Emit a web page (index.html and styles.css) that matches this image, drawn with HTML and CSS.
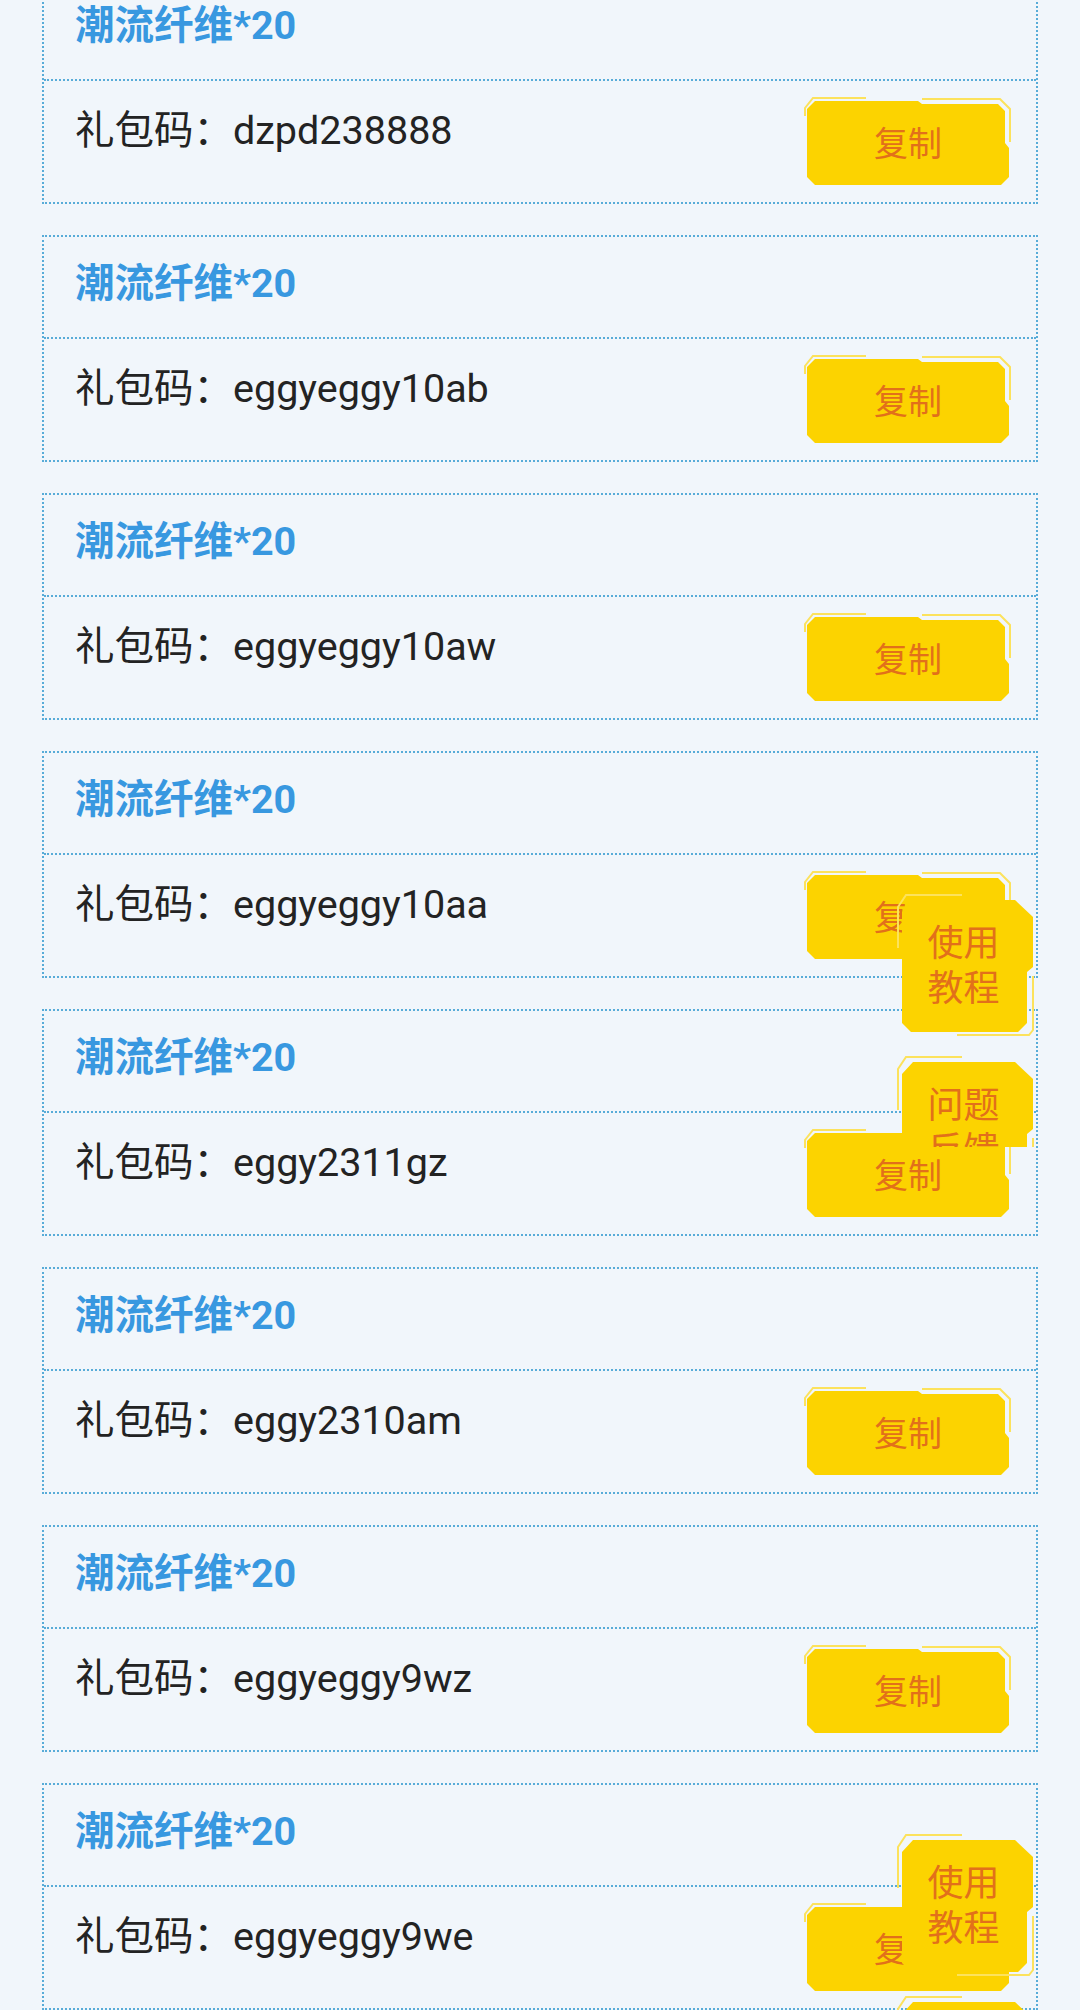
FILE: index.html
```html
<!DOCTYPE html>
<html lang="zh-CN">
<head>
    <meta charset="UTF-8">
    <meta name="viewport" content="width=device-width, initial-scale=1.0">
    <title>礼包码</title>
    <link rel="stylesheet" href="styles.css">
</head>
<body>
    <div class="page">
        <ul class="gift-list">
            <li class="gift">
                <div class="gift-name">潮流纤维*20</div>
                <div class="gift-code">
                    <span class="code-text">礼包码：dzpd238888</span>
                    <button class="copy-btn">
                        <svg class="copy-bg" viewBox="0 0 208 92"><polygon points="3,13 11,5 114,5 118,8 194,8 201,15 201,47 205,52 205,81 197,89 11,89 3,81"/><path d="M1,20 L1,12 L9,2 L62,2 M118,3 L196,3 L206,13 L206,46"/></svg>
                        <span class="copy-label">复制</span>
                    </button>
                </div>
            </li>
            <li class="gift">
                <div class="gift-name">潮流纤维*20</div>
                <div class="gift-code">
                    <span class="code-text">礼包码：eggyeggy10ab</span>
                    <button class="copy-btn">
                        <svg class="copy-bg" viewBox="0 0 208 92"><polygon points="3,13 11,5 114,5 118,8 194,8 201,15 201,47 205,52 205,81 197,89 11,89 3,81"/><path d="M1,20 L1,12 L9,2 L62,2 M118,3 L196,3 L206,13 L206,46"/></svg>
                        <span class="copy-label">复制</span>
                    </button>
                </div>
            </li>
            <li class="gift">
                <div class="gift-name">潮流纤维*20</div>
                <div class="gift-code">
                    <span class="code-text">礼包码：eggyeggy10aw</span>
                    <button class="copy-btn">
                        <svg class="copy-bg" viewBox="0 0 208 92"><polygon points="3,13 11,5 114,5 118,8 194,8 201,15 201,47 205,52 205,81 197,89 11,89 3,81"/><path d="M1,20 L1,12 L9,2 L62,2 M118,3 L196,3 L206,13 L206,46"/></svg>
                        <span class="copy-label">复制</span>
                    </button>
                </div>
            </li>
            <li class="gift">
                <div class="gift-name">潮流纤维*20</div>
                <div class="gift-code">
                    <span class="code-text">礼包码：eggyeggy10aa</span>
                    <button class="copy-btn">
                        <svg class="copy-bg" viewBox="0 0 208 92"><polygon points="3,13 11,5 114,5 118,8 194,8 201,15 201,47 205,52 205,81 197,89 11,89 3,81"/><path d="M1,20 L1,12 L9,2 L62,2 M118,3 L196,3 L206,13 L206,46"/></svg>
                        <span class="copy-label">复制</span>
                    </button>
                </div>
            </li>
            <li class="gift">
                <div class="gift-name">潮流纤维*20</div>
                <div class="gift-code">
                    <span class="code-text">礼包码：eggy2311gz</span>
                    <button class="copy-btn">
                        <svg class="copy-bg" viewBox="0 0 208 92"><polygon points="3,13 11,5 114,5 118,8 194,8 201,15 201,47 205,52 205,81 197,89 11,89 3,81"/><path d="M1,20 L1,12 L9,2 L62,2 M118,3 L196,3 L206,13 L206,46"/></svg>
                        <span class="copy-label">复制</span>
                    </button>
                </div>
            </li>
            <li class="gift">
                <div class="gift-name">潮流纤维*20</div>
                <div class="gift-code">
                    <span class="code-text">礼包码：eggy2310am</span>
                    <button class="copy-btn">
                        <svg class="copy-bg" viewBox="0 0 208 92"><polygon points="3,13 11,5 114,5 118,8 194,8 201,15 201,47 205,52 205,81 197,89 11,89 3,81"/><path d="M1,20 L1,12 L9,2 L62,2 M118,3 L196,3 L206,13 L206,46"/></svg>
                        <span class="copy-label">复制</span>
                    </button>
                </div>
            </li>
            <li class="gift">
                <div class="gift-name">潮流纤维*20</div>
                <div class="gift-code">
                    <span class="code-text">礼包码：eggyeggy9wz</span>
                    <button class="copy-btn">
                        <svg class="copy-bg" viewBox="0 0 208 92"><polygon points="3,13 11,5 114,5 118,8 194,8 201,15 201,47 205,52 205,81 197,89 11,89 3,81"/><path d="M1,20 L1,12 L9,2 L62,2 M118,3 L196,3 L206,13 L206,46"/></svg>
                        <span class="copy-label">复制</span>
                    </button>
                </div>
            </li>
            <li class="gift">
                <div class="gift-name">潮流纤维*20</div>
                <div class="gift-code">
                    <span class="code-text">礼包码：eggyeggy9we</span>
                    <button class="copy-btn">
                        <svg class="copy-bg" viewBox="0 0 208 92"><polygon points="3,13 11,5 114,5 118,8 194,8 201,15 201,47 205,52 205,81 197,89 11,89 3,81"/><path d="M1,20 L1,12 L9,2 L62,2 M118,3 L196,3 L206,13 L206,46"/></svg>
                        <span class="copy-label">复制</span>
                    </button>
                </div>
            </li>
        </ul>

        <!-- 悬浮按钮 -->
        <a class="float-btn guide-top" href="#">
            <span class="float-inner">
                <svg class="float-bg" viewBox="0 0 140 142"><polygon points="6,18 17,6 119,6 137,23 137,73 131,78 131,129 122,138 15,138 6,129"/><path d="M2,54 L2,13 L10,1 L66,1 M137,82 L137,136 L133,141 L61,141"/></svg>
                <span class="float-label">使用<br>教程</span>
            </span>
        </a>
        <a class="float-btn cut feedback-top" href="#">
            <span class="float-inner">
                <svg class="float-bg" viewBox="0 0 140 142"><polygon points="6,18 17,6 119,6 137,23 137,73 131,78 131,129 122,138 15,138 6,129"/><path d="M2,54 L2,13 L10,1 L66,1 M137,82 L137,136 L133,141 L61,141"/></svg>
                <span class="float-label">问题<br>反馈</span>
            </span>
        </a>
        <a class="float-btn guide-bottom" href="#">
            <span class="float-inner">
                <svg class="float-bg" viewBox="0 0 140 142"><polygon points="6,18 17,6 119,6 137,23 137,73 131,78 131,129 122,138 15,138 6,129"/><path d="M2,54 L2,13 L10,1 L66,1 M137,82 L137,136 L133,141 L61,141"/></svg>
                <span class="float-label">使用<br>教程</span>
            </span>
        </a>
        <a class="float-btn cut feedback-bottom" href="#">
            <span class="float-inner">
                <svg class="float-bg" viewBox="0 0 140 142"><polygon points="6,18 17,6 119,6 137,23 137,73 131,78 131,129 122,138 15,138 6,129"/><path d="M2,54 L2,13 L10,1 L66,1 M137,82 L137,136 L133,141 L61,141"/></svg>
                <span class="float-label">问题<br>反馈</span>
            </span>
        </a>
    </div>
</body>
</html>
```

FILE: styles.css
```css
html, body {
    margin: 0;
    background-color: #f1f6fb;
}

body {
    font-family: Roboto, 'Noto Sans CJK SC', sans-serif;
}

.page {
    position: relative;
    height: 2010px;
    overflow: hidden;
}

.gift-list {
    list-style: none;
    margin: -23px 42px 0;
    padding: 0;
}

.gift {
    border: 2px dotted #58acd8;
    margin-bottom: 31px;
}

.gift-name {
    display: flex;
    align-items: center;
    height: 102px;
    padding: 0 0 16px 31px;
    box-sizing: border-box;
    border-bottom: 2px dotted #58acd8;
    font-size: 39.5px;
    font-weight: bold;
    color: #3898e0;
}

.gift-code {
    display: flex;
    align-items: flex-start;
    height: 121px;
    padding: 15px 24px 0 31px;
    box-sizing: border-box;
}

.code-text {
    margin-top: 7px;
    font-size: 39.5px;
    line-height: 56px;
    color: #232323;
}

.copy-btn {
    display: grid;
    width: 208px;
    height: 92px;
    margin-left: auto;
    padding: 0;
    border: none;
    background: none;
    font-family: inherit;
    cursor: pointer;
}

.copy-btn > * {
    grid-area: 1 / 1;
}

.copy-bg {
    width: 208px;
    height: 92px;
}

.copy-bg polygon,
.float-bg polygon {
    fill: #fcd300;
}

.copy-bg path,
.float-bg path {
    fill: none;
    stroke: #fce25c;
    stroke-width: 2;
}

.copy-label {
    place-self: center;
    margin-bottom: 2px;
    font-size: 34px;
    color: #e2701a;
}

/* 悬浮按钮 */
.float-btn {
    position: absolute;
    left: 896px;
    width: 140px;
    height: 142px;
    overflow: hidden;
    text-decoration: none;
}

.float-btn.cut {
    height: 91px;
}

.guide-top {
    top: 894px;
}

.feedback-top {
    top: 1056px;
}

.guide-bottom {
    top: 1834px;
}

.feedback-bottom {
    top: 1996px;
}

.float-inner {
    display: grid;
    width: 140px;
    height: 142px;
}

.float-inner > * {
    grid-area: 1 / 1;
}

.float-bg {
    width: 140px;
    height: 142px;
}

.float-label {
    place-self: center;
    padding: 4px 5px 0 0;
    font-size: 36px;
    line-height: 45px;
    color: #e2701a;
}
```
